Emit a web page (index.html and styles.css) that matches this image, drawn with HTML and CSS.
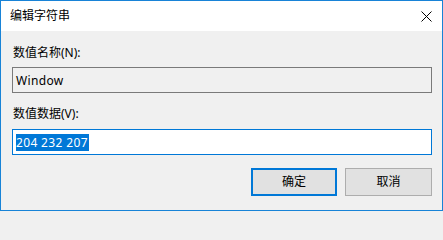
FILE: index.html
```html
<!DOCTYPE html>
<html lang="zh-CN">
<head>
<meta charset="utf-8">
<title>编辑字符串</title>
<link rel="stylesheet" href="styles.css">
</head>
<body>
<div class="window">
  <div class="titlebar">
    <span class="title">编辑字符串</span>
    <svg class="close" width="11" height="11" viewBox="0 0 11 11" aria-hidden="true">
      <path d="M0.5 0.5 L10.5 10.5 M10.5 0.5 L0.5 10.5" stroke="#000" stroke-width="1" fill="none"/>
    </svg>
  </div>
  <div class="content">
    <div class="label label-name">数值名称(N):</div>
    <div class="textbox readonly">Window</div>
    <div class="label label-data">数值数据(V):</div>
    <div class="textbox focused"><span class="selected">204 232 207</span></div>
    <div class="buttons">
      <div class="btn btn-default">确定</div>
      <div class="btn btn-cancel">取消</div>
    </div>
  </div>
</div>
</body>
</html>
```
FILE: styles.css
```css
html, body {
  margin: 0;
  padding: 0;
  background: #f0f0f0;
}
body {
  font-family: "Noto Sans", "Noto Sans CJK SC", sans-serif;
  font-size: 12px;
  color: #000;
}
.window {
  width: 443px;
  height: 211px;
  box-sizing: border-box;
  border: 1px solid #1883d7;
  background: #f0f0f0;
  display: flex;
  flex-direction: column;
}
.titlebar {
  height: 30px;
  background: #fff;
  display: flex;
  align-items: center;
  justify-content: space-between;
  padding: 0 10px 0 9px;
}
.title {
  font-size: 12px;
  line-height: 16px;
}
.close {
  display: block;
  margin-top: 1px;
}
.content {
  display: flex;
  flex-direction: column;
  padding: 14px 10px 0 11px;
}
.label {
  line-height: 16px;
  height: 16px;
  padding-left: 1px;
}
.label-data {
  margin-top: 13px;
}
.textbox {
  box-sizing: border-box;
  height: 26px;
  margin-top: 6px;
  display: flex;
  align-items: center;
  padding-left: 3px;
  line-height: 17px;
  letter-spacing: 0.35px;
}
.readonly {
  border: 1px solid #7a7a7a;
  background: #f0f0f0;
}
.focused {
  margin-top: 7px;
  border: 1px solid #0078d7;
  background: #fff;
}
.selected {
  background: #0078d7;
  color: #fff;
  height: 17px;
  line-height: 17px;
  padding-right: 1px;
}
.buttons {
  display: flex;
  justify-content: flex-end;
  gap: 8px;
  margin-top: 13px;
}
.btn {
  box-sizing: border-box;
  height: 28px;
  display: flex;
  align-items: center;
  justify-content: center;
  background: #e1e1e1;
  line-height: 16px;
}
.btn-default {
  width: 86px;
  border: 2px solid #0078d7;
}
.btn-cancel {
  width: 87px;
  border: 1px solid #adadad;
}
```
